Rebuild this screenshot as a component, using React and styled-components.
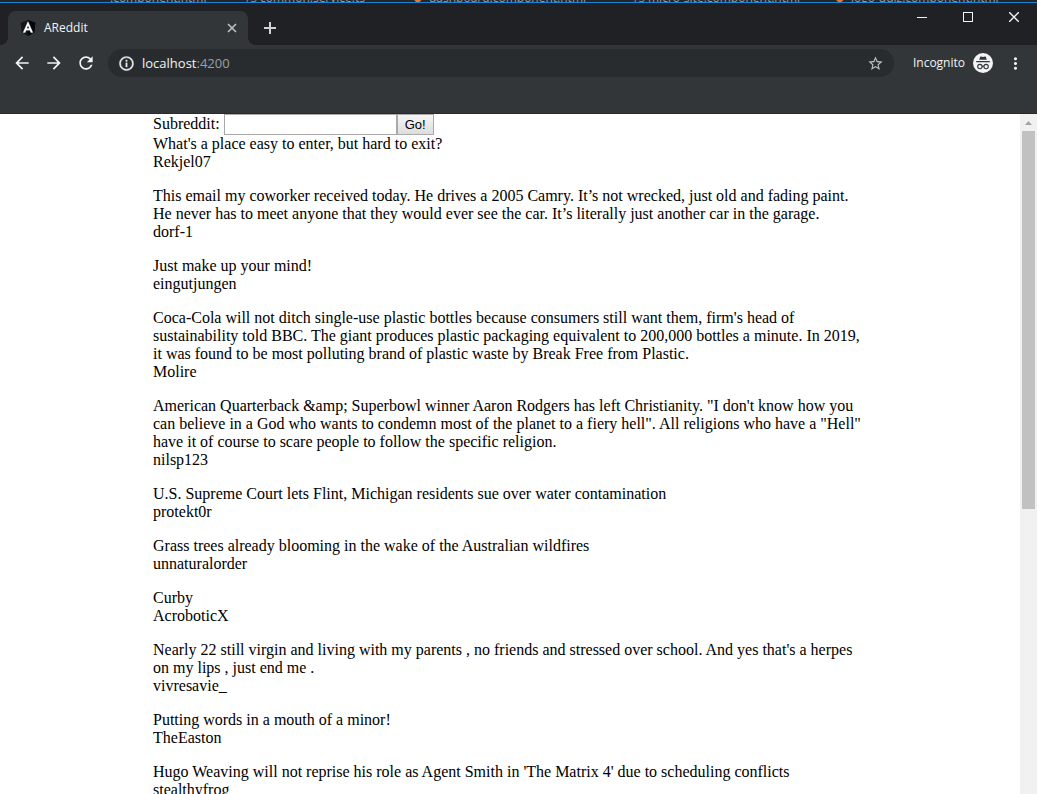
import React from "react";
import styled, { createGlobalStyle } from "styled-components";

const GlobalStyle = createGlobalStyle`
  * { box-sizing: border-box; }
  html, body { margin: 0; overflow: hidden; background: #fff; }
  button, input { margin: 0; }
`;

const Window = styled.div`
  display: flex;
  flex-direction: column;
  height: 100vh;
  overflow: hidden;
`;

const EditorStrip = styled.div`
  flex: none;
  display: flex;
  align-items: flex-end;
  height: 3px;
  padding-left: 94px;
  overflow: hidden;
  background: #252526;
  border-bottom: 1px solid #1883d7;
  font: 12px/18px "Open Sans", sans-serif;
  color: #9a9a9a;
  white-space: nowrap;
`;

const EditorTab = styled.span`
  flex: none;
  display: flex;
  width: ${(p) => p.$width}px;
  height: 13px;
  overflow: hidden;
  &::before {
    content: "${(p) => p.$mark}";
    width: 16px;
    color: ${(p) => p.$color};
  }
`;

const TabStrip = styled.header`
  flex: none;
  display: flex;
  align-items: flex-start;
  height: 42px;
  padding: 8px 0 0 8px;
  background: #202124;
`;

const Tab = styled.div`
  position: relative;
  display: flex;
  align-items: center;
  width: 240px;
  height: 34px;
  padding: 0 8px 0 12px;
  border-radius: 8px 8px 0 0;
  background: #323639;
  color: #f1f3f4;
  font: 12px/16px "Open Sans", sans-serif;
  &::before,
  &::after {
    content: "";
    position: absolute;
    bottom: 0;
    width: 8px;
    height: 8px;
  }
  &::before {
    right: 100%;
    background: radial-gradient(circle at 0 0, #202124 8px, #323639 8px);
  }
  &::after {
    left: 100%;
    background: radial-gradient(circle at 100% 0, #202124 8px, #323639 8px);
  }
`;

const TabTitle = styled.span`
  flex: 1;
  margin-left: 8px;
`;

const IconButton = styled.button`
  flex: none;
  display: flex;
  align-items: center;
  justify-content: center;
  width: ${(p) => p.$width || 16}px;
  height: ${(p) => p.$height || 16}px;
  padding: 0;
  border: 0;
  background: none;
  color: ${(p) => p.$color || "#f1f3f4"};
`;

const NewTabSlot = styled.div`
  padding: 3px 0 0 8px;
`;

const WindowControls = styled.div`
  display: flex;
  margin: -8px 0 0 auto;
`;

const Toolbar = styled.nav`
  flex: none;
  display: flex;
  align-items: flex-start;
  height: 69px;
  padding: 4px 8px 0 8px;
  background: #323639;
  border-bottom: 1px solid #28292c;
`;

const NavButtons = styled.div`
  display: flex;
  gap: 4px;
  margin-right: 8px;
`;

const AddressBar = styled.div`
  flex: 1;
  display: flex;
  align-items: center;
  height: 28px;
  padding: 0 9px;
  border-radius: 14px;
  background: #282c2f;
  font: 13px/18px "Open Sans", sans-serif;
  color: #9aa0a6;
`;

const Address = styled.span`
  flex: 1;
  margin-left: 7px;
`;

const Host = styled.span`
  color: #f1f3f4;
`;

const SiteInfo = styled(IconButton)`
  stroke: currentColor;
  stroke-width: 0.5px;
`;

const Profile = styled.div`
  display: flex;
  align-items: center;
  gap: 8px;
  height: 28px;
  margin: 0 8px 0 19px;
  color: #f1f3f4;
  font: 12px/18px "Open Sans", sans-serif;
`;

const Viewport = styled.div`
  flex: 1;
  display: flex;
  min-height: 0;
  background: #fff;
`;

const Page = styled.main`
  flex: 1;
  min-width: 0;
  overflow: hidden;
  color: #000;
  font: 16px/18px "Liberation Serif", "Times New Roman", serif;
`;

const Content = styled.div`
  width: 70%;
  margin: 0 auto;
`;

const SearchForm = styled.form`
  display: flex;
  align-items: flex-start;
  height: 21px;
`;

const SearchLabel = styled.label`
  line-height: 20px;
`;

const SearchInput = styled.input`
  width: 173px;
  height: 21px;
  margin-left: 4px;
  padding: 1px;
  border: 1px solid #a9a9a9;
  border-radius: 0;
  background: #fff;
  font: 13px "Liberation Sans", Arial, sans-serif;
`;

const GoButton = styled.button`
  height: 21px;
  width: 37px;
  padding: 0;
  border: 1px solid #a9a9a9;
  border-radius: 0;
  background: linear-gradient(#f6f6f6, #dddddd);
  color: #000;
  font: 13px/18px "Liberation Sans", Arial, sans-serif;
`;

const PostList = styled.ul`
  margin: 0;
  padding: 0;
  list-style: none;
`;

const Post = styled.li`
  margin-bottom: 16px;
`;

const Scrollbar = styled.div`
  flex: none;
  display: flex;
  flex-direction: column;
  width: 17px;
  padding: 0 2px;
  background: #f1f1f1;
`;

const ScrollArrow = styled.svg`
  flex: none;
  width: 13px;
  height: 17px;
`;

const ScrollThumb = styled.div`
  flex: 0 1 378px;
  background: #c1c1c1;
`;

const editorTabs = [
  { mark: "", text: ".component.html", width: 150, color: "#519aba" },
  { mark: "TS", text: "common.service.ts", width: 169, color: "#519aba" },
  { mark: "◆", text: "dashboard.component.html", width: 219, color: "#e37933" },
  { mark: "TS", text: "micro-site.component.html", width: 203, color: "#519aba" },
  { mark: "◆", text: "logo-quiz.component.html", width: 195, color: "#e37933" },
];

const posts = [
  ["What's a place easy to enter, but hard to exit?", "Rekjel07"],
  ["This email my coworker received today. He drives a 2005 Camry. It’s not wrecked, just old and fading paint. He never has to meet anyone that they would ever see the car. It’s literally just another car in the garage.", "dorf-1"],
  ["Just make up your mind!", "eingutjungen"],
  ["Coca-Cola will not ditch single-use plastic bottles because consumers still want them, firm's head of sustainability told BBC. The giant produces plastic packaging equivalent to 200,000 bottles a minute. In 2019, it was found to be most polluting brand of plastic waste by Break Free from Plastic.", "Molire"],
  ["American Quarterback &amp; Superbowl winner Aaron Rodgers has left Christianity. \"I don't know how you can believe in a God who wants to condemn most of the planet to a fiery hell\". All religions who have a \"Hell\" have it of course to scare people to follow the specific religion.", "nilsp123"],
  ["U.S. Supreme Court lets Flint, Michigan residents sue over water contamination", "protekt0r"],
  ["Grass trees already blooming in the wake of the Australian wildfires", "unnaturalorder"],
  ["Curby", "AcroboticX"],
  ["Nearly 22 still virgin and living with my parents , no friends and stressed over school. And yes that's a herpes on my lips , just end me .", "vivresavie_"],
  ["Putting words in a mouth of a minor!", "TheEaston"],
  ["Hugo Weaving will not reprise his role as Agent Smith in 'The Matrix 4' due to scheduling conflicts", "stealthyfrog"],
];

function AppLogo() {
  return (
    <svg width="16" height="16" viewBox="0 0 16 16" aria-hidden="true">
      <path d="M8 0L15.4 2.7L14.3 12.5L8 16L1.7 12.5L.6 2.7Z" fill="#13161d" />
      <path d="M8 0L15.4 2.7L14.3 12.5L8 16Z" fill="#05070d" />
      <path d="M8 1.6L3.1 12.6H5.2L6.1 10.2H9.9L10.8 12.6H12.9ZM8 5.4L9.3 8.5H6.7Z" fill="#fff" stroke="#fff" strokeWidth=".3" fillRule="evenodd" />
    </svg>
  );
}

function MaterialIcon({ d, size = 20 }) {
  return (
    <svg width={size} height={size} viewBox="0 0 24 24" fill="currentColor" aria-hidden="true">
      <path d={d} />
    </svg>
  );
}

function LineIcon({ d, size, weight = 1, crisp }) {
  return (
    <svg width={size} height={size} viewBox={`0 0 ${size} ${size}`} fill="none" stroke="currentColor" strokeWidth={weight} shapeRendering={crisp ? "crispEdges" : "auto"} aria-hidden="true">
      <path d={d} />
    </svg>
  );
}

function IncognitoIcon() {
  return (
    <svg width="20" height="20" viewBox="0 0 20 20" aria-hidden="true">
      <circle cx="10" cy="10" r="10" fill="#f1f3f4" />
      <path d="M6.2 6.8L7.2 3.8Q7.4 3.3 8 3.5L10 4L12 3.5Q12.6 3.3 12.8 3.8L13.8 6.8ZM3.2 8H16.8V9.2H3.2Z" fill="#323639" />
      <g fill="none" stroke="#323639" strokeWidth="1.1">
        <circle cx="6.9" cy="13.6" r="2.2" />
        <circle cx="13.1" cy="13.6" r="2.2" />
        <path d="M9.1 13.4Q10 12.8 10.9 13.4" />
      </g>
    </svg>
  );
}

export default function App() {
  return (
    <>
      <GlobalStyle />
      <Window>
        <EditorStrip aria-hidden="true">
          {editorTabs.map((t) => (
            <EditorTab key={t.text} $width={t.width} $mark={t.mark} $color={t.color}>{t.text}</EditorTab>
          ))}
        </EditorStrip>
        <TabStrip>
          <Tab>
            <AppLogo />
            <TabTitle>AReddit</TabTitle>
            <IconButton aria-label="Close tab" $color="#bdc1c6">
              <LineIcon size={16} weight={1.6} d="M4 4L12 12M12 4L4 12" />
            </IconButton>
          </Tab>
          <NewTabSlot>
            <IconButton aria-label="New tab" $width={28} $height={28} $color="#d0d3d6">
              <LineIcon size={12} weight={2} d="M6 0V12M0 6H12" />
            </IconButton>
          </NewTabSlot>
          <WindowControls>
            <IconButton aria-label="Minimize" $width={46} $height={28}>
              <LineIcon size={10} crisp d="M0 5.5H10" />
            </IconButton>
            <IconButton aria-label="Maximize" $width={46} $height={28}>
              <LineIcon size={10} crisp d="M.5 .5H9.5V9.5H.5Z" />
            </IconButton>
            <IconButton aria-label="Close window" $width={46} $height={28}>
              <LineIcon size={10} weight={1.4} d="M0 0L10 10M10 0L0 10" />
            </IconButton>
          </WindowControls>
        </TabStrip>
        <Toolbar>
          <NavButtons>
            <IconButton aria-label="Back" $width={28} $height={28}>
              <MaterialIcon d="M20 11H7.83l5.59-5.59L12 4l-8 8 8 8 1.41-1.41L7.83 13H20v-2z" />
            </IconButton>
            <IconButton aria-label="Forward" $width={28} $height={28}>
              <MaterialIcon d="M12 4l-1.41 1.41L16.17 11H4v2h12.17l-5.58 5.59L12 20l8-8z" />
            </IconButton>
            <IconButton aria-label="Reload" $width={28} $height={28}>
              <MaterialIcon d="M17.65 6.35C16.2 4.9 14.21 4 12 4c-4.42 0-7.99 3.58-7.99 8s3.57 8 7.99 8c3.73 0 6.84-2.55 7.73-6h-2.08c-.82 2.33-3.04 4-5.65 4-3.31 0-6-2.69-6-6s2.69-6 6-6c1.66 0 3.14.69 4.22 1.78L13 11h7V4l-2.35 2.35z" />
            </IconButton>
          </NavButtons>
          <AddressBar>
            <SiteInfo aria-label="View site information" $width={18} $height={18} $color="#e8eaed">
              <MaterialIcon size={17} d="M11 17h2v-6h-2v6zm1-15C6.48 2 2 6.48 2 12s4.48 10 10 10 10-4.48 10-10S17.52 2 12 2zm0 18c-4.41 0-8-3.59-8-8s3.59-8 8-8 8 3.59 8 8-3.59 8-8 8zM11 9h2V7h-2v2z" />
            </SiteInfo>
            <Address><Host>localhost</Host>:4200</Address>
            <IconButton aria-label="Bookmark this page" $width={18} $height={18} $color="#bdc1c6">
              <MaterialIcon size={17} d="M22 9.24l-7.19-.62L12 2 9.19 8.63 2 9.24l5.46 4.73L5.82 21 12 17.27 18.18 21l-1.63-7.03L22 9.24zM12 15.4l-3.76 2.27 1-4.28-3.32-2.88 4.38-.38L12 6.1l1.71 4.04 4.38.38-3.32 2.88 1 4.28L12 15.4z" />
            </IconButton>
          </AddressBar>
          <Profile>
            Incognito
            <IncognitoIcon />
          </Profile>
          <IconButton aria-label="Menu" $width={28} $height={28}>
            <MaterialIcon size={19} d="M12 8c1.1 0 2-.9 2-2s-.9-2-2-2-2 .9-2 2 .9 2 2 2zm0 2c-1.1 0-2 .9-2 2s.9 2 2 2 2-.9 2-2-.9-2-2-2zm0 6c-1.1 0-2 .9-2 2s.9 2 2 2 2-.9 2-2-.9-2-2-2z" />
          </IconButton>
        </Toolbar>
        <Viewport>
          <Page>
            <Content>
              <SearchForm onSubmit={(e) => e.preventDefault()}>
                <SearchLabel htmlFor="subreddit">Subreddit:</SearchLabel>
                <SearchInput id="subreddit" type="text" />
                <GoButton type="submit">Go!</GoButton>
              </SearchForm>
              <PostList>
                {posts.map(([title, author]) => (
                  <Post key={author}>
                    <div>{title}</div>
                    <div>{author}</div>
                  </Post>
                ))}
              </PostList>
            </Content>
          </Page>
          <Scrollbar aria-hidden="true">
            <ScrollArrow viewBox="0 0 13 17">
              <path d="M3 11L6.5 7L10 11Z" fill="#a3a3a3" />
            </ScrollArrow>
            <ScrollThumb />
          </Scrollbar>
        </Viewport>
      </Window>
    </>
  );
}
